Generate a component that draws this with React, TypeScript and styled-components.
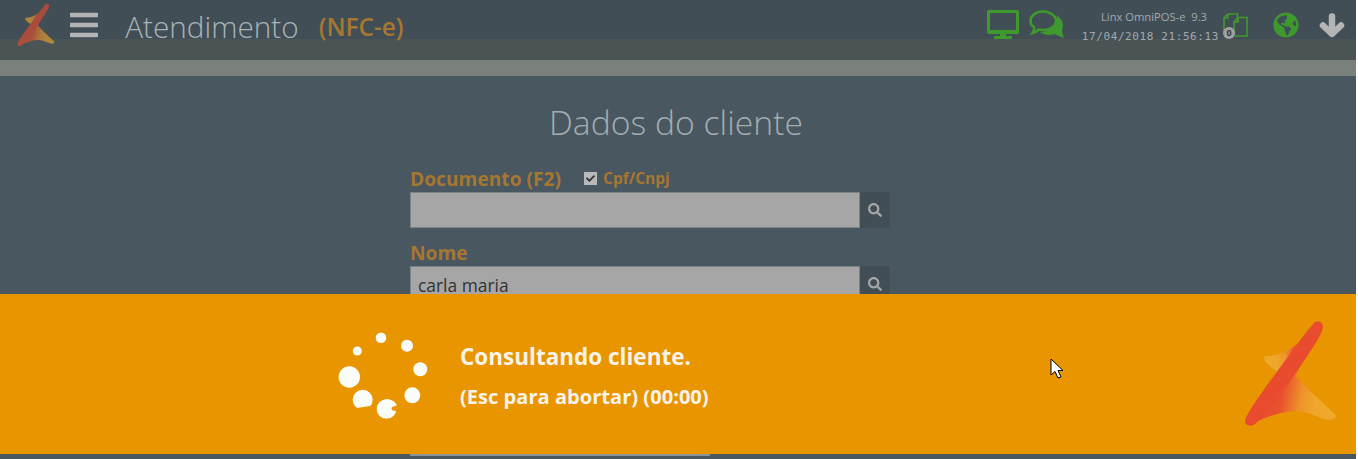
import React from 'react';
import styled, { createGlobalStyle } from 'styled-components';
import { FaBars, FaGlobeAmericas, FaSearch, FaCheck } from 'react-icons/fa';

const GREEN = '#3f9a2e';

const GlobalStyle = createGlobalStyle`
  html, body {
    margin: 0;
    padding: 0;
    height: 100%;
    overflow: hidden;
    background: #fff;
    font-family: 'Open Sans', 'Noto Sans', sans-serif;
  }
`;

function Logo({ height, gradientId }: { height: number; gradientId: string }) {
  return (
    <svg width={(height * 94) / 108} height={height} viewBox="0 0 94 108">
      <defs>
        <linearGradient id={`${gradientId}-up`} gradientUnits="userSpaceOnUse" x1="52" y1="30" x2="30" y2="36">
          <stop offset="0" stopColor="#e8552e" />
          <stop offset="0.55" stopColor="#ee962a" />
          <stop offset="1" stopColor="#f0a82c" />
        </linearGradient>
        <linearGradient id={`${gradientId}-down`} gradientUnits="userSpaceOnUse" x1="38" y1="75" x2="72" y2="82">
          <stop offset="0" stopColor="#e8502e" />
          <stop offset="0.55" stopColor="#ee922a" />
          <stop offset="1" stopColor="#f0a82c" />
        </linearGradient>
      </defs>
      <path
        d="M21 36 C32 37 48 31 66 13 L52 56 L38 54 C32 51 24 46 21 41 C20 39 20 37 21 36 Z"
        fill={`url(#${gradientId}-up)`}
      />
      <path
        d="M49 53 C62 68 80 84 91 94 C93 98 90 100 86 100 C76 100 66 90 50 91 C36 92 22 97 8 104 L30 66 Z"
        fill={`url(#${gradientId}-down)`}
      />
      <path
        d="M70 3 C74 0 79 2 79 7 C78 14 70 26 60 41 C46 62 24 92 11 104 C7 107 1 106 1 101 C2 94 18 72 32 53 C44 37 60 14 70 3 Z"
        fill="#e94b2e"
      />
    </svg>
  );
}

function DesktopIcon() {
  return (
    <svg width="32" height="29" viewBox="0 0 32 29">
      <path
        fillRule="evenodd"
        d="M2 0 H30 A2 2 0 0 1 32 2 V22 A2 2 0 0 1 30 24 H2 A2 2 0 0 1 0 22 V2 A2 2 0 0 1 2 0 Z M3 3 V20 H29 V3 Z"
        fill={GREEN}
      />
      <path d="M13 24 H19 V26 H25 V29 H7 V26 H13 Z" fill={GREEN} />
    </svg>
  );
}

function ChatIcon() {
  return (
    <svg width="35" height="28" viewBox="0 0 35 28">
      <path
        d="M27.5 5 C33 9 35 14 33.5 18 C33 20 33 24 35 28 C31 27 28 25 26 24 C20 26 15 25 11 22 C20 22 30 16 27.5 5 Z"
        fill={GREEN}
      />
      <path
        d="M14 1.5 C21 1.5 27 5.500 27 11 C27 16.500 21 20 14 20 C12.500 20 11 19.800 10 19.500 C8 21.500 6 22.500 3.500 23 C5 21 5.500 19 5 17 C2.500 15.500 1.500 13 1.500 11 C1.500 5.500 7 1.500 14 1.500 Z"
        fill="none"
        stroke={GREEN}
        strokeWidth="2.600"
      />
    </svg>
  );
}

function DocsIcon() {
  return (
    <svg width="25" height="24" viewBox="0 0 25 24" fill="none" stroke={GREEN} strokeWidth="1.600">
      <path d="M1 20 V5 L5 1 H14.500 V9" />
      <path d="M1 5 H5 V1" />
      <path d="M11 23 V9 L15 4.500 H24 V23 Z" />
      <path d="M11 9 H15 V4.500" />
    </svg>
  );
}

function DownArrowIcon() {
  return (
    <svg width="26" height="25" viewBox="0 0 26 25" fill="none" stroke="#b4b4b4" strokeWidth="6.500" strokeLinecap="round" strokeLinejoin="round">
      <path d="M13 3.500 V20" />
      <path d="M4 12.500 L13 21 L22 12.500" />
    </svg>
  );
}

function SpinnerDots() {
  return (
    <SpinnerSvg width="100" height="95" viewBox="0 0 100 95" fill="#fafdf8">
      <circle cx="14.300" cy="49" r="10.700" />
      <circle cx="27.700" cy="71.700" r="10" />
      <path d="M22 80 L38 77.500 V84 H22 Z" fill="#e89500" />
      <circle cx="51.500" cy="81" r="9.800" />
      <path d="M50 71.500 C55 70.500 60 73 62 77.500 L56 77.500 Z" />
      <ellipse cx="61.500" cy="80.500" rx="5" ry="2.500" fill="#e89500" />
      <circle cx="77.300" cy="67.300" r="8" />
      <circle cx="85.300" cy="41.300" r="7" />
      <circle cx="72" cy="17.700" r="6" />
      <circle cx="46" cy="9.700" r="5.300" />
      <circle cx="22.300" cy="23" r="4.500" />
    </SpinnerSvg>
  );
}

export default function App() {
  return (
    <>
      <GlobalStyle />
      <Page>
        <Header>
          <HeaderLeft>
            <HeaderLogo><Logo height={44} gradientId="header-logo" /></HeaderLogo>
            <MenuIcon />
            <Title>Atendimento</Title>
            <Subtitle>(NFC-e)</Subtitle>
          </HeaderLeft>
          <HeaderRight>
            <DesktopIcon />
            <ChatSlot><ChatIcon /></ChatSlot>
            <Info>
              <Version>Linx OmniPOS-e&nbsp; 9.3</Version>
              <Clock>17/04/2018 21:56:13</Clock>
            </Info>
            <Docs>
              <DocsIcon />
              <Count>0</Count>
            </Docs>
            <Globe />
            <ArrowSlot><DownArrowIcon /></ArrowSlot>
          </HeaderRight>
        </Header>
        <Stripe />
        <Bar />
        <Form>
          <Heading>Dados do cliente</Heading>
          <Field>
            <LabelRow>
              <Label>Documento (F2)</Label>
              <Check><FaCheck size={9} color="#333" /></Check>
              <CheckLabel>Cpf/Cnpj</CheckLabel>
            </LabelRow>
            <InputRow>
              <Input />
              <SearchButton><FaSearch size={14} /></SearchButton>
            </InputRow>
          </Field>
          <Field>
            <LabelRow>
              <Label>Nome</Label>
            </LabelRow>
            <InputRow>
              <Input>carla maria</Input>
              <SearchButton><FaSearch size={14} /></SearchButton>
            </InputRow>
          </Field>
        </Form>
        <Overlay>
          <SpinnerDots />
          <Message>
            <MessageTitle>Consultando cliente.</MessageTitle>
            <MessageHint>(Esc para abortar) (00:00)</MessageHint>
          </Message>
          <Cursor width="14" height="22" viewBox="0 0 14 22">
            <path d="M1 1 L1 17 L5 13.500 L8 20 L11 19 L8 12.500 L13 12.500 Z" fill="#fff" stroke="#000" strokeWidth="1" />
          </Cursor>
          <BigLogo><Logo height={108} gradientId="overlay-logo" /></BigLogo>
        </Overlay>
        <BottomLine />
      </Page>
    </>
  );
}

const Page = styled.div`
  position: relative;
  width: 1356px;
  height: 459px;
  overflow: hidden;
  background: #485760;
`;

const Header = styled.header`
  display: flex;
  justify-content: space-between;
  align-items: flex-start;
  height: 39px;
  padding: 0 11px 0 17px;
  background: #414e56;
`;

const HeaderLeft = styled.div`
  display: flex;
  align-items: center;
  height: 50px;
`;

const HeaderLogo = styled.div`
  display: flex;
  opacity: 0.62;
`;

const MenuIcon = styled(FaBars)`
  width: 28px;
  height: 32px;
  margin-left: 15px;
  color: #b4b4b4;
`;

const Title = styled.span`
  margin: 2px 0 0 27px;
  font-size: 29.700px;
  font-weight: 300;
  color: #a8b4b8;
`;

const Subtitle = styled.span`
  margin: 2px 0 0 20px;
  font-size: 24.400px;
  font-weight: 600;
  color: #a8772f;
`;

const HeaderRight = styled.div`
  display: flex;
  align-items: flex-start;
  padding-top: 10px;
`;

const ChatSlot = styled.div`
  display: flex;
  margin-left: 10px;
`;

const Info = styled.div`
  display: flex;
  flex-direction: column;
  align-items: flex-end;
  margin: -1px 0 0 18px;
  color: #a3aaad;
`;

const Version = styled.span`
  margin-right: 12px;
  font-size: 11.200px;
  line-height: 16px;
`;

const Clock = styled.span`
  font-family: 'DejaVu Sans Mono', monospace;
  font-size: 11px;
  line-height: 24px;
  letter-spacing: 0.600px;
`;

const Docs = styled.div`
  position: relative;
  display: flex;
  margin: 3px 0 0 4px;
`;

const Count = styled.span`
  position: absolute;
  left: 0;
  top: 14px;
  width: 12px;
  height: 12px;
  border-radius: 50%;
  background: #a0a0a0;
  color: #333;
  font-size: 9px;
  font-weight: 700;
  line-height: 12px;
  text-align: center;
`;

const Globe = styled(FaGlobeAmericas)`
  width: 26px;
  height: 26px;
  margin: 2px 0 0 25px;
  color: ${GREEN};
`;

const ArrowSlot = styled.div`
  display: flex;
  margin: 3px 0 0 20px;
`;

const Stripe = styled.div`
  height: 21px;
  background: #4b5455;
`;

const Bar = styled.div`
  height: 16px;
  background: #7a807b;
`;

const Form = styled.main`
  width: 480px;
  margin-left: 410px;
`;

const Heading = styled.h1`
  width: 532px;
  margin: 23px 0 18px;
  font-size: 33.700px;
  font-weight: 300;
  line-height: 47px;
  text-align: center;
  white-space: nowrap;
  color: #a3adb1;
`;

const Field = styled.div`
  margin-bottom: 10px;
`;

const LabelRow = styled.div`
  display: flex;
  align-items: center;
  height: 28px;
`;

const Label = styled.span`
  margin-top: 1px;
  font-size: 19.200px;
  font-weight: 700;
  color: #a6772f;
`;

const Check = styled.span`
  display: flex;
  align-items: center;
  justify-content: center;
  width: 13px;
  height: 13px;
  margin: 0 6px 0 23px;
  background: #b9b9b9;
`;

const CheckLabel = styled.span`
  font-size: 15.500px;
  font-weight: 700;
  color: #a6772f;
`;

const InputRow = styled.div`
  display: flex;
  height: 36px;
`;

const Input = styled.div`
  flex: 1;
  box-sizing: border-box;
  padding-left: 7px;
  border: 1px solid #7a8488;
  background: #a6a6a6;
  font-size: 17.400px;
  line-height: 36px;
  color: #333;
`;

const SearchButton = styled.div`
  display: flex;
  align-items: center;
  justify-content: center;
  width: 30px;
  background: #414e56;
  color: #a6a6a6;
`;

const Overlay = styled.div`
  position: absolute;
  left: 0;
  right: 0;
  top: 294px;
  display: flex;
  align-items: flex-start;
  box-sizing: border-box;
  height: 160px;
  padding: 34px 0 0 335px;
  background: #e89500;
`;

const SpinnerSvg = styled.svg`
  flex: none;
`;

const Message = styled.div`
  margin: 15px 0 0 25px;
  color: #f8f3ea;
  font-weight: 700;
`;

const MessageTitle = styled.div`
  font-size: 22.500px;
  line-height: 28px;
`;

const MessageHint = styled.div`
  margin-top: 12px;
  font-size: 20.100px;
  line-height: 28px;
`;

const Cursor = styled.svg`
  position: absolute;
  left: 1050px;
  top: 64px;
`;

const BigLogo = styled.div`
  position: absolute;
  left: 1244px;
  top: 26px;
  display: flex;
`;

const BottomLine = styled.div`
  position: absolute;
  left: 410px;
  top: 454px;
  width: 300px;
  height: 2px;
  background: #8d9496;
`;
